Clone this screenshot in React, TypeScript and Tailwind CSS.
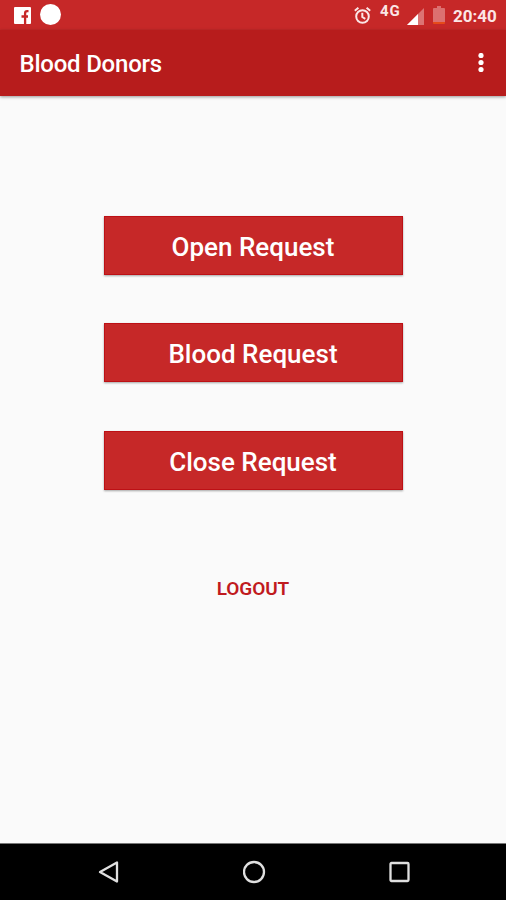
interface RequestButtonProps {
  label: string;
}

const requests = ["Open Request", "Blood Request", "Close Request"];

function StatusBar() {
  return (
    <div className="flex h-[30px] shrink-0 items-start bg-[#c62828] pl-[14px] pr-[9px] text-white">
      <svg className="mt-[7px] h-[17px] w-[17px]" viewBox="0 0 17 17">
        <rect width="17" height="17" rx="1" fill="currentColor" />
        <path
          d="M14.500 4.200h-1.300c-1.400 0-2.100.7-2.100 2V17M7.500 9.500h6.500"
          fill="none"
          stroke="#c62828"
          strokeWidth="2.300"
        />
      </svg>
      <span className="ml-[9px] mt-1 h-[21px] w-[21px] rounded-full bg-white" />
      <svg
        className="ml-auto mt-[7px] h-[17px] w-[17px] text-[#fbe6e6]"
        viewBox="0 0 17 17"
        fill="none"
        stroke="currentColor"
        strokeWidth="2"
      >
        <circle cx="8.500" cy="9.500" r="6.300" />
        <path d="M8.300 5.800v4.200l3 1.800M.8 3.700 4.400.8M16.200 3.700 12.600.8" />
      </svg>
      <span className="ml-[9px] mt-[3px] w-[21px] text-[15px] font-bold leading-4 tracking-[0.8px] text-[#fbe6e6]">
        4G
      </span>
      <svg className="ml-[6px] mt-2 h-[17px] w-[17px]" viewBox="0 0 17 17">
        <path d="M17 0v17H0z" fill="#dc7474" />
        <path d="M11 6v11H0z" fill="#fff" />
      </svg>
      <svg className="ml-[9px] mt-[6px] h-[18px] w-3" viewBox="0 0 12 18">
        <path d="M4 0h4v2h3a1 1 0 0 1 1 1v13H0V3a1 1 0 0 1 1-1h3z" fill="#dc7070" />
        <path d="M0 16h12v1a1 1 0 0 1-1 1H1a1 1 0 0 1-1-1z" fill="#e64a19" />
      </svg>
      <span className="ml-2 mt-[6px] w-[44px] whitespace-nowrap text-[17px] font-bold leading-5 text-[#fbe6e6]">
        20:40
      </span>
    </div>
  );
}

function AppBar() {
  return (
    <header className="z-10 flex h-[66px] shrink-0 items-center justify-between bg-[#b71c1c] pl-[19.500px] pr-[22px] text-white shadow-[0_1px_3px_rgba(0,0,0,0.4)]">
      <h1 className="pt-px text-[24px] font-medium leading-7 tracking-[-0.22px]">Blood Donors</h1>
      <button type="button" aria-label="Menu">
        <svg className="h-5 w-[6px]" viewBox="0 0 6 20" fill="currentColor">
          <circle cx="3" cy="2.500" r="2.600" />
          <circle cx="3" cy="9.500" r="2.600" />
          <circle cx="3" cy="16.500" r="2.600" />
        </svg>
      </button>
    </header>
  );
}

function RequestButton({ label }: RequestButtonProps) {
  return (
    <button
      type="button"
      className="flex h-[59px] w-[299px] items-center justify-center border border-[#bd1015] bg-[#c62828] pt-[3px] text-[26px] font-medium leading-8 text-white shadow-[0_1px_2px_rgba(0,0,0,0.35)]"
    >
      {label}
    </button>
  );
}

function NavigationBar() {
  return (
    <nav className="flex h-[57px] shrink-0 items-center justify-between border-t border-[#777] bg-black pl-[98px] pr-[94px]">
      <svg className="h-6 w-6" viewBox="0 0 24 24" fill="none" stroke="#e0e0e0" strokeWidth="2.300" strokeLinejoin="round">
        <path d="M19 2.500v19L2 12z" />
      </svg>
      <svg className="h-6 w-6" viewBox="0 0 24 24" fill="none" stroke="#e0e0e0" strokeWidth="2.300">
        <circle cx="11" cy="12" r="10" />
      </svg>
      <svg className="h-6 w-6" viewBox="0 0 24 24" fill="none" stroke="#e0e0e0" strokeWidth="2.300">
        <rect x="2.500" y="3" width="18" height="18" rx="1" />
      </svg>
    </nav>
  );
}

export default function App() {
  return (
    <div className="flex h-[900px] w-[506px] flex-col overflow-hidden bg-[#fafafa] font-['Roboto',sans-serif]">
      <StatusBar />
      <AppBar />
      <main className="flex flex-1 flex-col items-center pt-[119.700px]">
        <div className="flex flex-col gap-[48.700px]">
          {requests.map((label) => (
            <RequestButton key={label} label={label} />
          ))}
        </div>
        <button type="button" className="mt-[87px] text-[19px] font-semibold leading-6 tracking-[-0.1px] text-[#c01a1e]">
          LOGOUT
        </button>
      </main>
      <NavigationBar />
    </div>
  );
}
